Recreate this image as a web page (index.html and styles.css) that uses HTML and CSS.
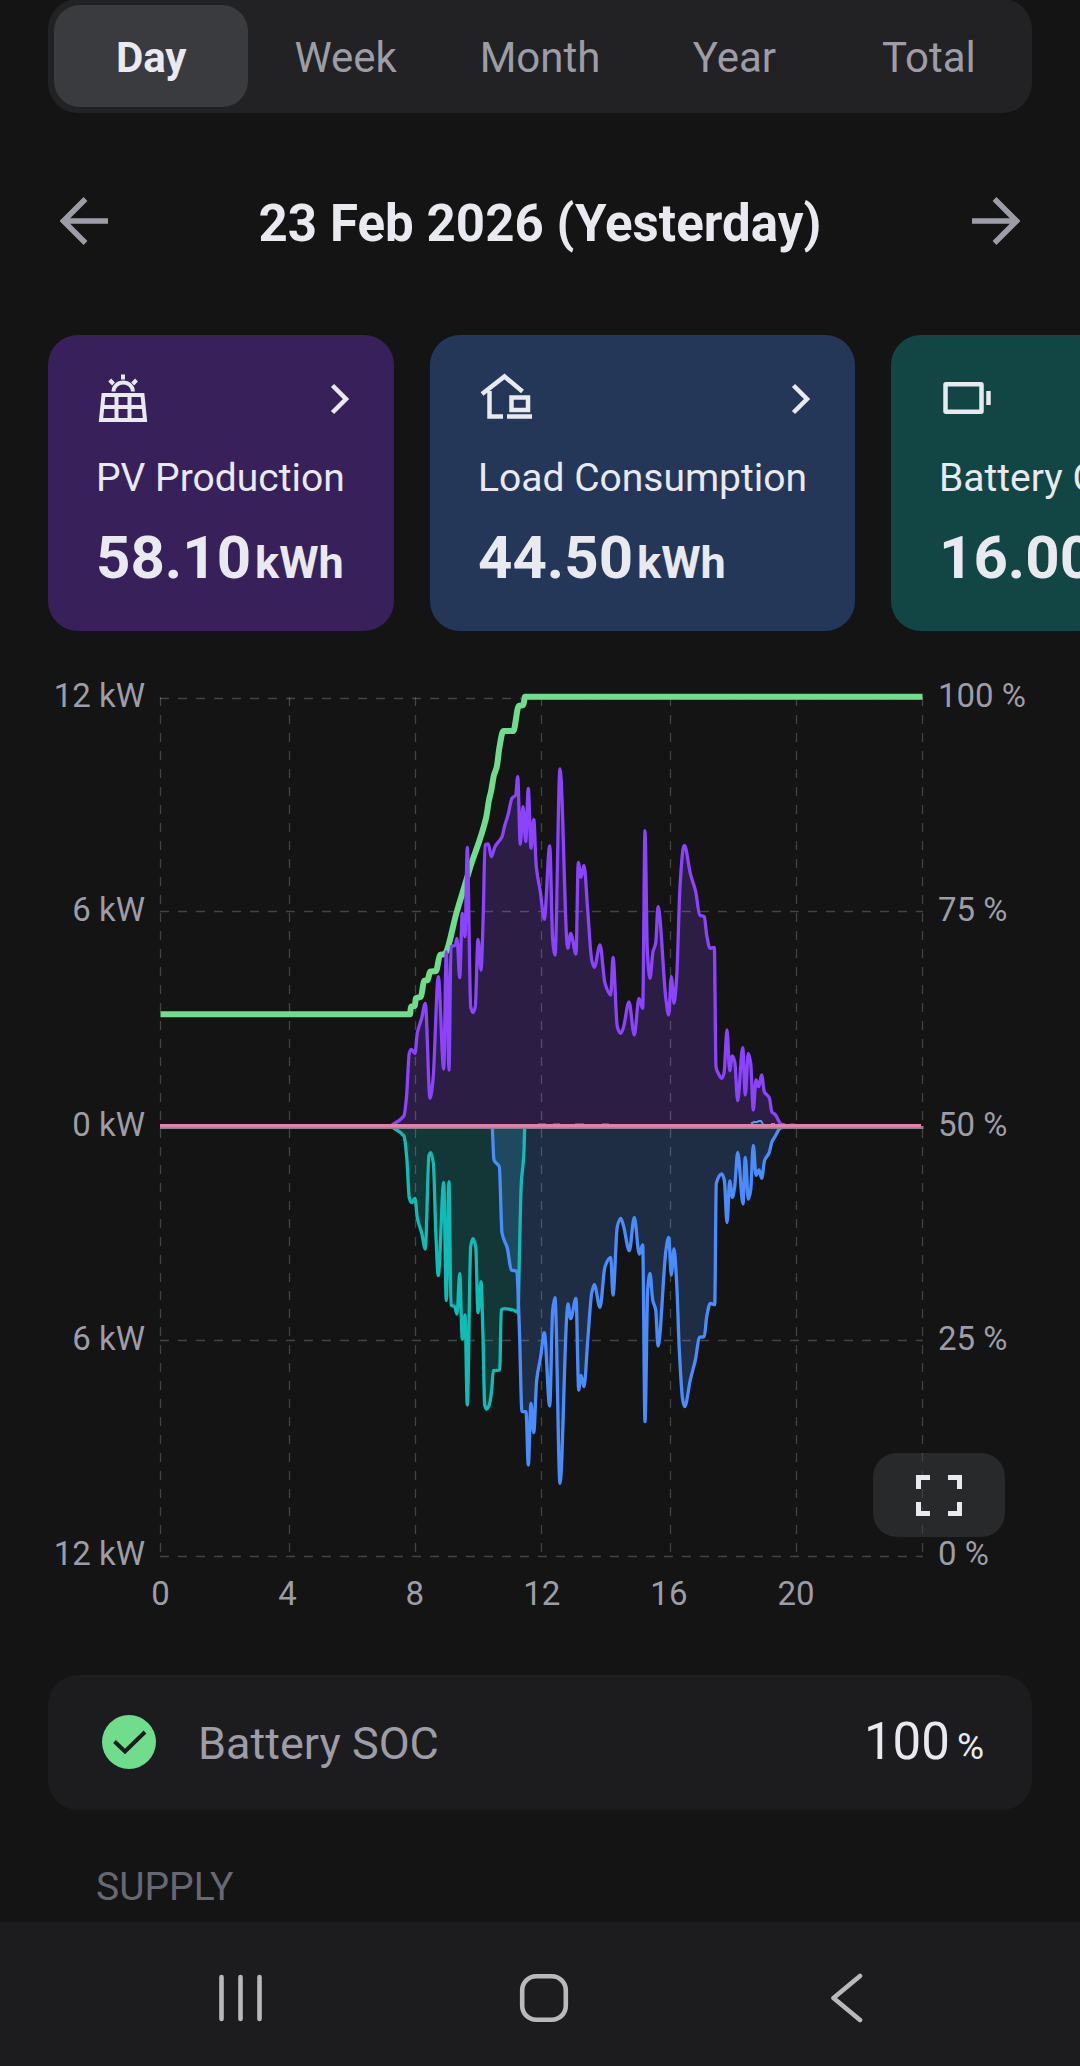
FILE: index.html
```html
<!DOCTYPE html>
<html lang="en">
<head>
    <meta charset="UTF-8">
    <meta name="viewport" content="width=device-width, initial-scale=1.0">
    <title>Energy Statistics</title>
    <link rel="stylesheet" href="styles.css">
</head>
<body>
    <main class="page">
        <div class="tabs">
            <button class="tab active">Day</button>
            <button class="tab">Week</button>
            <button class="tab">Month</button>
            <button class="tab">Year</button>
            <button class="tab">Total</button>
        </div>

        <div class="date-bar">
            <svg class="arrow" width="48" height="48" viewBox="0 0 48 48"><path d="M48 24H4M25.500 2L3.500 24l22 22"/></svg>
            <h1>23 Feb 2026 (Yesterday)</h1>
            <svg class="arrow" width="48" height="48" viewBox="0 0 48 48"><path d="M0 24h44M22.500 2l22 22l-22 22"/></svg>
        </div>

        <div class="cards">
            <div class="card pv">
                <div class="card-top">
                    <svg width="54" height="54" viewBox="0 0 54 54">
                        <path d="M7.500 23h39l2.500 25h-44zM6 35h42M20.500 23v25M33.500 23v25" stroke-width="4"/>
                        <path d="M17.500 19.500a9.700 9 0 0 1 19.400 0M27 2.500v5M13.700 8l3.800 4M40.500 8l-3.800 4" stroke-width="4"/>
                    </svg>
                    <svg class="chevron" width="20" height="32" viewBox="0 0 20 32"><path d="M2.500 2.500L16 16L2.500 29.500" stroke-width="4.500"/></svg>
                </div>
                <div class="card-label">PV Production</div>
                <div class="card-value">58.10<span>kWh</span></div>
            </div>
            <div class="card load">
                <div class="card-top">
                    <svg width="54" height="54" viewBox="0 0 54 54">
                        <path d="M4 22L26.500 4.500L44.500 19.500M11.500 19v25.500H25" stroke-width="4.500"/>
                        <path d="M33.500 25.500h16.500v12.500H33.500zM29 44.500h25" stroke-width="4.500"/>
                    </svg>
                    <svg class="chevron" width="20" height="32" viewBox="0 0 20 32"><path d="M2.500 2.500L16 16L2.500 29.500" stroke-width="4.500"/></svg>
                </div>
                <div class="card-label">Load Consumption</div>
                <div class="card-value">44.50<span>kWh</span></div>
            </div>
            <div class="card battery">
                <div class="card-top">
                    <svg width="54" height="54" viewBox="0 0 54 54">
                        <rect x="6.500" y="12.200" width="36" height="27.500" rx="0.500" stroke-width="4.500"/>
                        <path d="M49.500 19v14" stroke-width="4.500"/>
                    </svg>
                    <svg class="chevron" width="20" height="32" viewBox="0 0 20 32"><path d="M2.500 2.500L16 16L2.500 29.500" stroke-width="4.500"/></svg>
                </div>
                <div class="card-label">Battery Charge</div>
                <div class="card-value">16.00<span>kWh</span></div>
            </div>
        </div>

        <div class="chart">
            <svg id="chart" width="1080" height="960" viewBox="0 670 1080 960">
                <g id="areas"></g>
                <g id="grid"></g>
                <g id="lines"></g>
                <g id="labels"></g>
            </svg>
            <button class="fullscreen">
                <svg width="46" height="41" viewBox="0 0 46 41"><path d="M2.500 14V2.500H14M32 2.500h11.500V14M43.500 27v11.500H32M14 38.500H2.500V27"/></svg>
            </button>
        </div>

        <div class="row">
            <svg width="54" height="54" viewBox="0 0 54 54">
                <circle cx="27" cy="27" r="27" fill="#70dd8c"/>
                <path d="M12.500 26.500L23 36.500L43 17" fill="none" stroke="#1c1c1e" stroke-width="4"/>
            </svg>
            <span class="row-name">Battery SOC</span>
            <span class="row-value">100<small>%</small></span>
        </div>

        <div class="group-title">SUPPLY</div>
    </main>

    <nav class="navbar">
        <svg width="44" height="48" viewBox="0 0 44 48"><path d="M3.500 3v42M22.500 3v42M41.500 3v42"/></svg>
        <svg class="home" width="50" height="50" viewBox="0 0 50 50"><rect x="3.200" y="3.200" width="43.600" height="43.600" rx="14"/></svg>
        <svg width="34" height="50" viewBox="0 0 34 50"><path d="M31 3L4.500 25L31 47"/></svg>
    </nav>

    <script src="script.js"></script>
</body>
</html>
```
FILE: styles.css
```css
* {
    box-sizing: border-box;
}
body {
    margin: 0;
    background: #141414;
    color: #e9e9f0;
    font-family: Roboto, "Liberation Sans", sans-serif;
    height: 2066px;
    overflow: hidden;
}
button {
    border: none;
    background: none;
    padding: 0;
    font-family: inherit;
}
.page {
    height: 1922px;
    overflow: hidden;
}
.tabs {
    display: flex;
    margin: -1px 48px 0;
    height: 114px;
    padding: 6px;
    background: #222224;
    border-radius: 30px;
}
.tab {
    flex: 1;
    padding-top: 2px;
    font-size: 42px;
    color: #9d9da8;
}
.tab.active {
    background: #3a3b3e;
    border-radius: 26px;
    color: #e9e9f0;
    font-weight: bold;
}
.date-bar {
    display: flex;
    align-items: center;
    justify-content: space-between;
    height: 96px;
    margin: 60px 60px 0;
}
.date-bar h1 {
    margin: 4px 0 0;
    font-size: 51px;
    font-weight: bold;
    letter-spacing: 0.06px;
}
.arrow {
    fill: none;
    stroke: #9d9da8;
    stroke-width: 5.5;
}
.cards {
    display: flex;
    gap: 36px;
    padding-left: 48px;
    margin-top: 66px;
    overflow: hidden;
}
.card {
    flex: none;
    height: 296px;
    padding: 36px 48px 0;
    border-radius: 30px;
}
.card svg {
    fill: none;
    stroke: #e9e9f0;
}
.pv {
    width: 346px;
    background: #38205a;
}
.load {
    width: 425px;
    background: #243759;
}
.battery {
    width: 400px;
    background: #124645;
}
.card-top {
    display: flex;
    align-items: center;
    justify-content: space-between;
    height: 56px;
}
.chevron {
    margin-right: -4px;
}
.card-label {
    margin-top: 27px;
    font-size: 39px;
    line-height: 48px;
    white-space: nowrap;
}
.card-value {
    margin-top: 20px;
    font-size: 60px;
    line-height: 72px;
    font-weight: bold;
    white-space: nowrap;
}
.card-value span {
    font-size: 45px;
    margin-left: 4px;
}
.chart {
    position: relative;
    margin-top: 39px;
    height: 960px;
}
.chart > svg {
    display: block;
}
.chart text {
    fill: #9d9da8;
    font-size: 33px;
}
/* floats over the lower right corner of the plot */
.fullscreen {
    position: absolute;
    left: 873px;
    top: 783px;
    width: 132px;
    height: 84px;
    display: flex;
    align-items: center;
    justify-content: center;
    background: rgba(60, 62, 65, 0.5);
    border-radius: 24px;
}
.fullscreen svg {
    fill: none;
    stroke: #e9e9f0;
    stroke-width: 5;
}
.row {
    display: flex;
    align-items: center;
    height: 135px;
    margin: 45px 48px 0;
    padding: 0 48px 2px 54px;
    background: #1c1c1e;
    border-radius: 30px;
}
.row-name {
    margin: 4px 0 0 42px;
    font-size: 45px;
    color: #9d9da8;
}
.row-value {
    margin-left: auto;
    font-size: 51px;
}
.row-value small {
    font-size: 37px;
    margin-left: 7px;
}
.group-title {
    margin: 53px 96px 0;
    font-size: 39px;
    line-height: 48px;
    color: #676874;
}
.navbar {
    display: flex;
    align-items: center;
    height: 144px;
    padding: 8px 217px 0 218px;
    background: #1c1c1e;
    justify-content: space-between;
}
.navbar svg {
    fill: none;
    stroke: #b9b9b9;
    stroke-width: 4.6;
    stroke-linecap: round;
    stroke-linejoin: round;
}
.navbar .home {
    margin-right: 4px;
}
```
FILE: script.js
```js
const NS = "http://www.w3.org/2000/svg";
const ZERO = 1126;

const pv = [[392,1125],[404,1115.7],[406.5,1097],[409.3,1053],[411.3,1049.3],[415,1053.3],[417.3,1033],[421.7,1018],[425.3,1003.3],[430,1098.3],[433,1080],[438.3,976.7],[443.7,1069],[446.3,951.7],[449,1070],[451,946.7],[455.3,945.3],[457,938.3],[459.7,977.7],[462.3,913.3],[465,936.7],[467.3,847.3],[470.7,1006.7],[473,1012.7],[475.3,1006.7],[478,939.3],[481,970],[483.3,913],[485,845],[488.3,844],[491.3,856.7],[495,846.7],[502,836.7],[504.7,825.7],[508,815],[512,798.3],[515.7,795],[517.7,776.7],[520.3,844.3],[523,806.7],[525.7,841.7],[528.3,788.3],[531,848.3],[533.7,819.3],[536.3,866.7],[540.3,891.7],[544.3,919.3],[549.7,846],[552.7,940],[555,955],[560,769],[567.7,948.3],[570.7,933.3],[576,954],[578.3,862.3],[581,877.3],[584,865.3],[587.7,910],[591.7,960],[594.3,967.3],[600,945],[605,983.3],[610.7,995],[613,957.3],[617.3,1026.7],[620.7,1033.3],[623.3,1028],[629,1002],[634.3,1035],[639,998.3],[642.7,1008.3],[645,830.7],[647.3,950],[650,978.3],[653,951.7],[655.7,943.3],[658,906.7],[666,1000],[668.7,1015],[671.3,976.7],[674,1003.3],[676.7,976.7],[680,886.7],[683.3,848],[684.5,845.5],[690.3,873.3],[695.7,891.7],[699.7,915],[704.3,916.7],[706.7,935],[710,948.3],[714.3,947.5],[716,1066.7],[718.3,1073.3],[721.7,1078.3],[724,1073.3],[727,1030],[729.7,1070.7],[732.3,1056],[734.7,1061.7],[737.7,1100.7],[742.7,1047.7],[745.3,1095],[748.3,1053.3],[750.7,1063.3],[753.3,1110],[756,1080],[758.7,1086.7],[761.7,1075],[764.3,1091.7],[769.3,1097.7],[772,1112.3],[775,1114.3],[781,1124],[785,1125]];

const charge = [[392,1127],[404,1136],[406.7,1156.7],[409.3,1198],[411.7,1202.7],[415,1198.3],[417.3,1218],[421.7,1233],[425.3,1249],[429,1155],[430.7,1152.7],[433.3,1163],[436,1237],[438.3,1275.7],[443.7,1182.3],[446.3,1300.7],[449,1181.7],[451,1305],[454.7,1306.7],[457,1314],[459.7,1273.7],[462.3,1339.3],[465,1315],[467.3,1405],[470.7,1246.7],[473,1238.7],[475.7,1246.7],[478,1312.7],[481,1281.7],[483,1336.7],[484.7,1405],[486.7,1409],[489.3,1405],[491.7,1390],[493.3,1370.7],[499.7,1370],[501.3,1310],[504,1308.7],[513.3,1310],[518,1312.3],[519.3,1260],[521.3,1183],[523.7,1156.7],[524.7,1127]];

const load = [[492.3,1127],[494,1160],[499.3,1166.7],[502,1233],[507.3,1248],[511.3,1270],[516.7,1271.3],[519.3,1326.7],[522,1411.7],[526,1411.7],[528.3,1465],[531,1403.3],[533.7,1432.7],[536.7,1380],[540.7,1356.7],[544.3,1332.7],[549.7,1406],[552.7,1310],[555,1297.7],[560,1483.3],[566.7,1316.7],[568,1304],[570.7,1318.7],[576,1298.3],[578.7,1390],[581,1375.3],[584,1386.7],[588,1336.7],[591.7,1293.3],[594.3,1284.7],[600,1307.3],[605,1266.7],[610.7,1257.3],[613,1295],[617.3,1226.7],[620.7,1218.3],[623.3,1225],[629.3,1250.7],[634.3,1217.3],[639.3,1254],[642.7,1245],[645,1421.7],[647.7,1290],[650,1273.3],[652.7,1300],[655.7,1310],[658,1346],[666,1250],[668.7,1237.3],[671.3,1275],[674,1249],[676.7,1283.3],[679.3,1350],[682.7,1400],[684.7,1406.7],[690.3,1380],[695.7,1358.3],[699.3,1337.3],[704.3,1336.7],[706.7,1316.7],[710.3,1303.3],[714.7,1304.7],[716.3,1183.3],[721.7,1174],[724.3,1180],[727,1222.7],[729.7,1181],[732.3,1197.3],[734.7,1186.7],[737.7,1152.3],[743,1204],[745.3,1157.3],[748.3,1199.3],[750.7,1190],[753.3,1145.3],[756,1175.3],[759,1170],[761.7,1178.3],[764.7,1160],[769,1153.3],[772,1141.7],[775,1136.7],[780,1128.3],[784,1127]];

const soc = [[160.5,1014.3],[410,1014.3],[411,1006.7],[415,1006],[415.7,998.3],[421,996.7],[424,981],[427.7,980],[430,971.7],[436,971],[440,955],[444.3,954],[457,911],[470,868],[486,818.3],[489,800],[491,791.7],[494,775],[496.7,767.3],[499.3,748.3],[503.3,731],[513.3,731],[518.7,706],[523.3,705],[525,696.7],[922.5,696.7]];

function add(parent, tag, attrs, text) {
    const el = document.createElementNS(NS, tag);
    for (const k in attrs) el.setAttribute(k, attrs[k]);
    if (text) el.textContent = text;
    document.getElementById(parent).appendChild(el);
}

// monotone cubic through the points, so peaks never overshoot
function smooth(p) {
    const s = [];
    for (let i = 0; i < p.length - 1; i++) {
        s.push((p[i + 1][1] - p[i][1]) / (p[i + 1][0] - p[i][0]));
    }
    const m = p.map((_, i) => {
        if (i === 0) return s[0];
        if (i === p.length - 1) return s[i - 1];
        if (s[i - 1] * s[i] <= 0) return 0;
        return 2 * s[i - 1] * s[i] / (s[i - 1] + s[i]);
    });
    let d = "M" + p[0].join(" ");
    for (let i = 0; i < p.length - 1; i++) {
        const h = (p[i + 1][0] - p[i][0]) / 3;
        d += `C${p[i][0] + h} ${p[i][1] + m[i] * h} ${p[i + 1][0] - h} ${p[i + 1][1] - m[i + 1] * h} ${p[i + 1].join(" ")}`;
    }
    return d;
}

function series(points, color) {
    const d = smooth(points);
    const last = points[points.length - 1][0];
    add("areas", "path", { d: `${d}L${last} ${ZERO}L${points[0][0]} ${ZERO}Z`, fill: color, "fill-opacity": 0.21 });
    add("lines", "path", { d, fill: "none", stroke: color, "stroke-width": 3.3, "stroke-linejoin": "round" });
}

const dash = { stroke: "rgba(255,255,255,0.2)", "stroke-width": 1.3, "stroke-dasharray": "9 9" };
[160.5, 289.5, 415.5, 541.5, 670.5, 796.5, 922.5].forEach(x =>
    add("grid", "line", { x1: x, x2: x, y1: 697, y2: 1557, ...dash }));
[698.5, 911.5, 1340.5, 1556.5].forEach(y =>
    add("grid", "line", { x1: 160, x2: 923, y1: y, y2: y, ...dash }));

add("lines", "path", { d: smooth(soc), fill: "none", stroke: "#70dd8c", "stroke-width": 6, "stroke-linejoin": "round" });
series(pv, "#8b43fc");
series(charge, "#10bcb6");
series(load, "#4a8cfc");

// grid import and the idle series along the zero line
add("lines", "path", { d: "M538 1124.500h8M553 1124.500h7M575 1124.500h9M602 1124.500h7M751 1123.500l3-1.500h3l2-1h2l2 3M771 1124h4", fill: "none", stroke: "#3ea6ea", "stroke-width": 2 });
add("lines", "path", { d: "M790 1124.500h5", fill: "none", stroke: "#8b43fc", "stroke-width": 2 });
add("lines", "line", { x1: 160, x2: 923.5, y1: 1127.5, y2: 1127.5, stroke: "#85838a", "stroke-width": 3 });
add("lines", "line", { x1: 160, x2: 921, y1: 1125.7, y2: 1125.7, stroke: "#e67fae", "stroke-width": 3.4 });

["12 kW", "6 kW", "0 kW", "6 kW", "12 kW"].forEach((t, i) =>
    add("labels", "text", { x: 145, y: 707 + i * 214.4, "text-anchor": "end" }, t));
["100 %", "75 %", "50 %", "25 %", "0 %"].forEach((t, i) =>
    add("labels", "text", { x: 938, y: 707 + i * 214.4 }, t));
[0, 4, 8, 12, 16, 20].forEach((h, i) =>
    add("labels", "text", { x: 160.5 + i * 127.1, y: 1605, "text-anchor": "middle" }, String(h)));
```
